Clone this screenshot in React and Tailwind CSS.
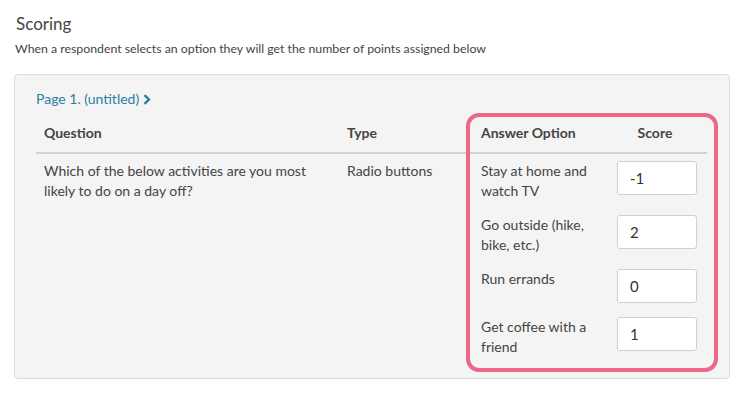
import React from "react";

const options = [
  { label: "Stay at home and watch TV", score: "-1" },
  { label: "Go outside (hike, bike, etc.)", score: "2" },
  { label: "Run errands", score: "0" },
  { label: "Get coffee with a friend", score: "1" },
];

const App = () => {
  return (
    <div className="w-[747px] h-[401px] bg-white font-['Lato','Liberation_Sans',sans-serif] text-[#444]">
      <div className="pt-[13px] pl-[16px] text-[17px] leading-[22px] text-[#444]">Scoring</div>
      <div className="pl-[15px] mt-[5px] text-[12.3px] leading-[18px] text-[#444]">
        When a respondent selects an option they will get the number of points assigned below
      </div>

      {/* Scoring panel */}
      <div className="relative mt-[16px] ml-[14px] w-[716px] h-[305px] bg-[#f4f4f4] border border-[#dcdcdc] rounded-[4px] pt-[15px] pl-[21px]">
        <div className="flex items-center gap-[4px] text-[14px] leading-[18px] text-[#2b7fa3]">
          <span>Page 1. (untitled)</span>
          <svg width="8" height="11" viewBox="0 0 8 11">
            <path d="M1.5 1.2 L6 5.5 L1.5 9.8" fill="none" stroke="#2b7fa3" strokeWidth="2.4" />
          </svg>
        </div>

        <table className="mt-[6px] w-[671px] table-fixed border-collapse text-[14px] leading-[20px]">
          <thead>
            <tr className="border-b-2 border-[#d2d2d2]">
              <th className="w-[311px] h-[39px] pl-[8px] text-left font-bold">Question</th>
              <th className="w-[126px] text-left font-bold">Type</th>
              <th className="w-[130px] pl-[8px] text-left font-bold">Answer Option</th>
              <th className="w-[104px] text-center font-bold">Score</th>
            </tr>
          </thead>
          <tbody>
            {options.map((opt, i) => (
              <tr key={i}>
                {i === 0 && (
                  <>
                    <td rowSpan={4} className="align-top pl-[8px] pr-[20px] pt-[7px]">
                      Which of the below activities are you most likely to do on a day off?
                    </td>
                    <td rowSpan={4} className="align-top pt-[7px]">Radio buttons</td>
                  </>
                )}
                <td className="align-top pl-[8px] pr-[8px] py-[7px]">{opt.label}</td>
                <td className="align-top py-[7px]">
                  <div className="ml-[14px] w-[80px] h-[34px] bg-white border border-[#d0d0d0] rounded-[3px] pl-[12px] flex items-center text-[15px] text-[#333]">
                    {opt.score}
                  </div>
                </td>
              </tr>
            ))}
          </tbody>
        </table>

        {/* highlight annotation */}
        <div className="absolute left-[451px] top-[38px] w-[252px] h-[259px] border-4 border-[#ef6688] rounded-[13px] pointer-events-none" />
      </div>
    </div>
  );
};

export default App;
